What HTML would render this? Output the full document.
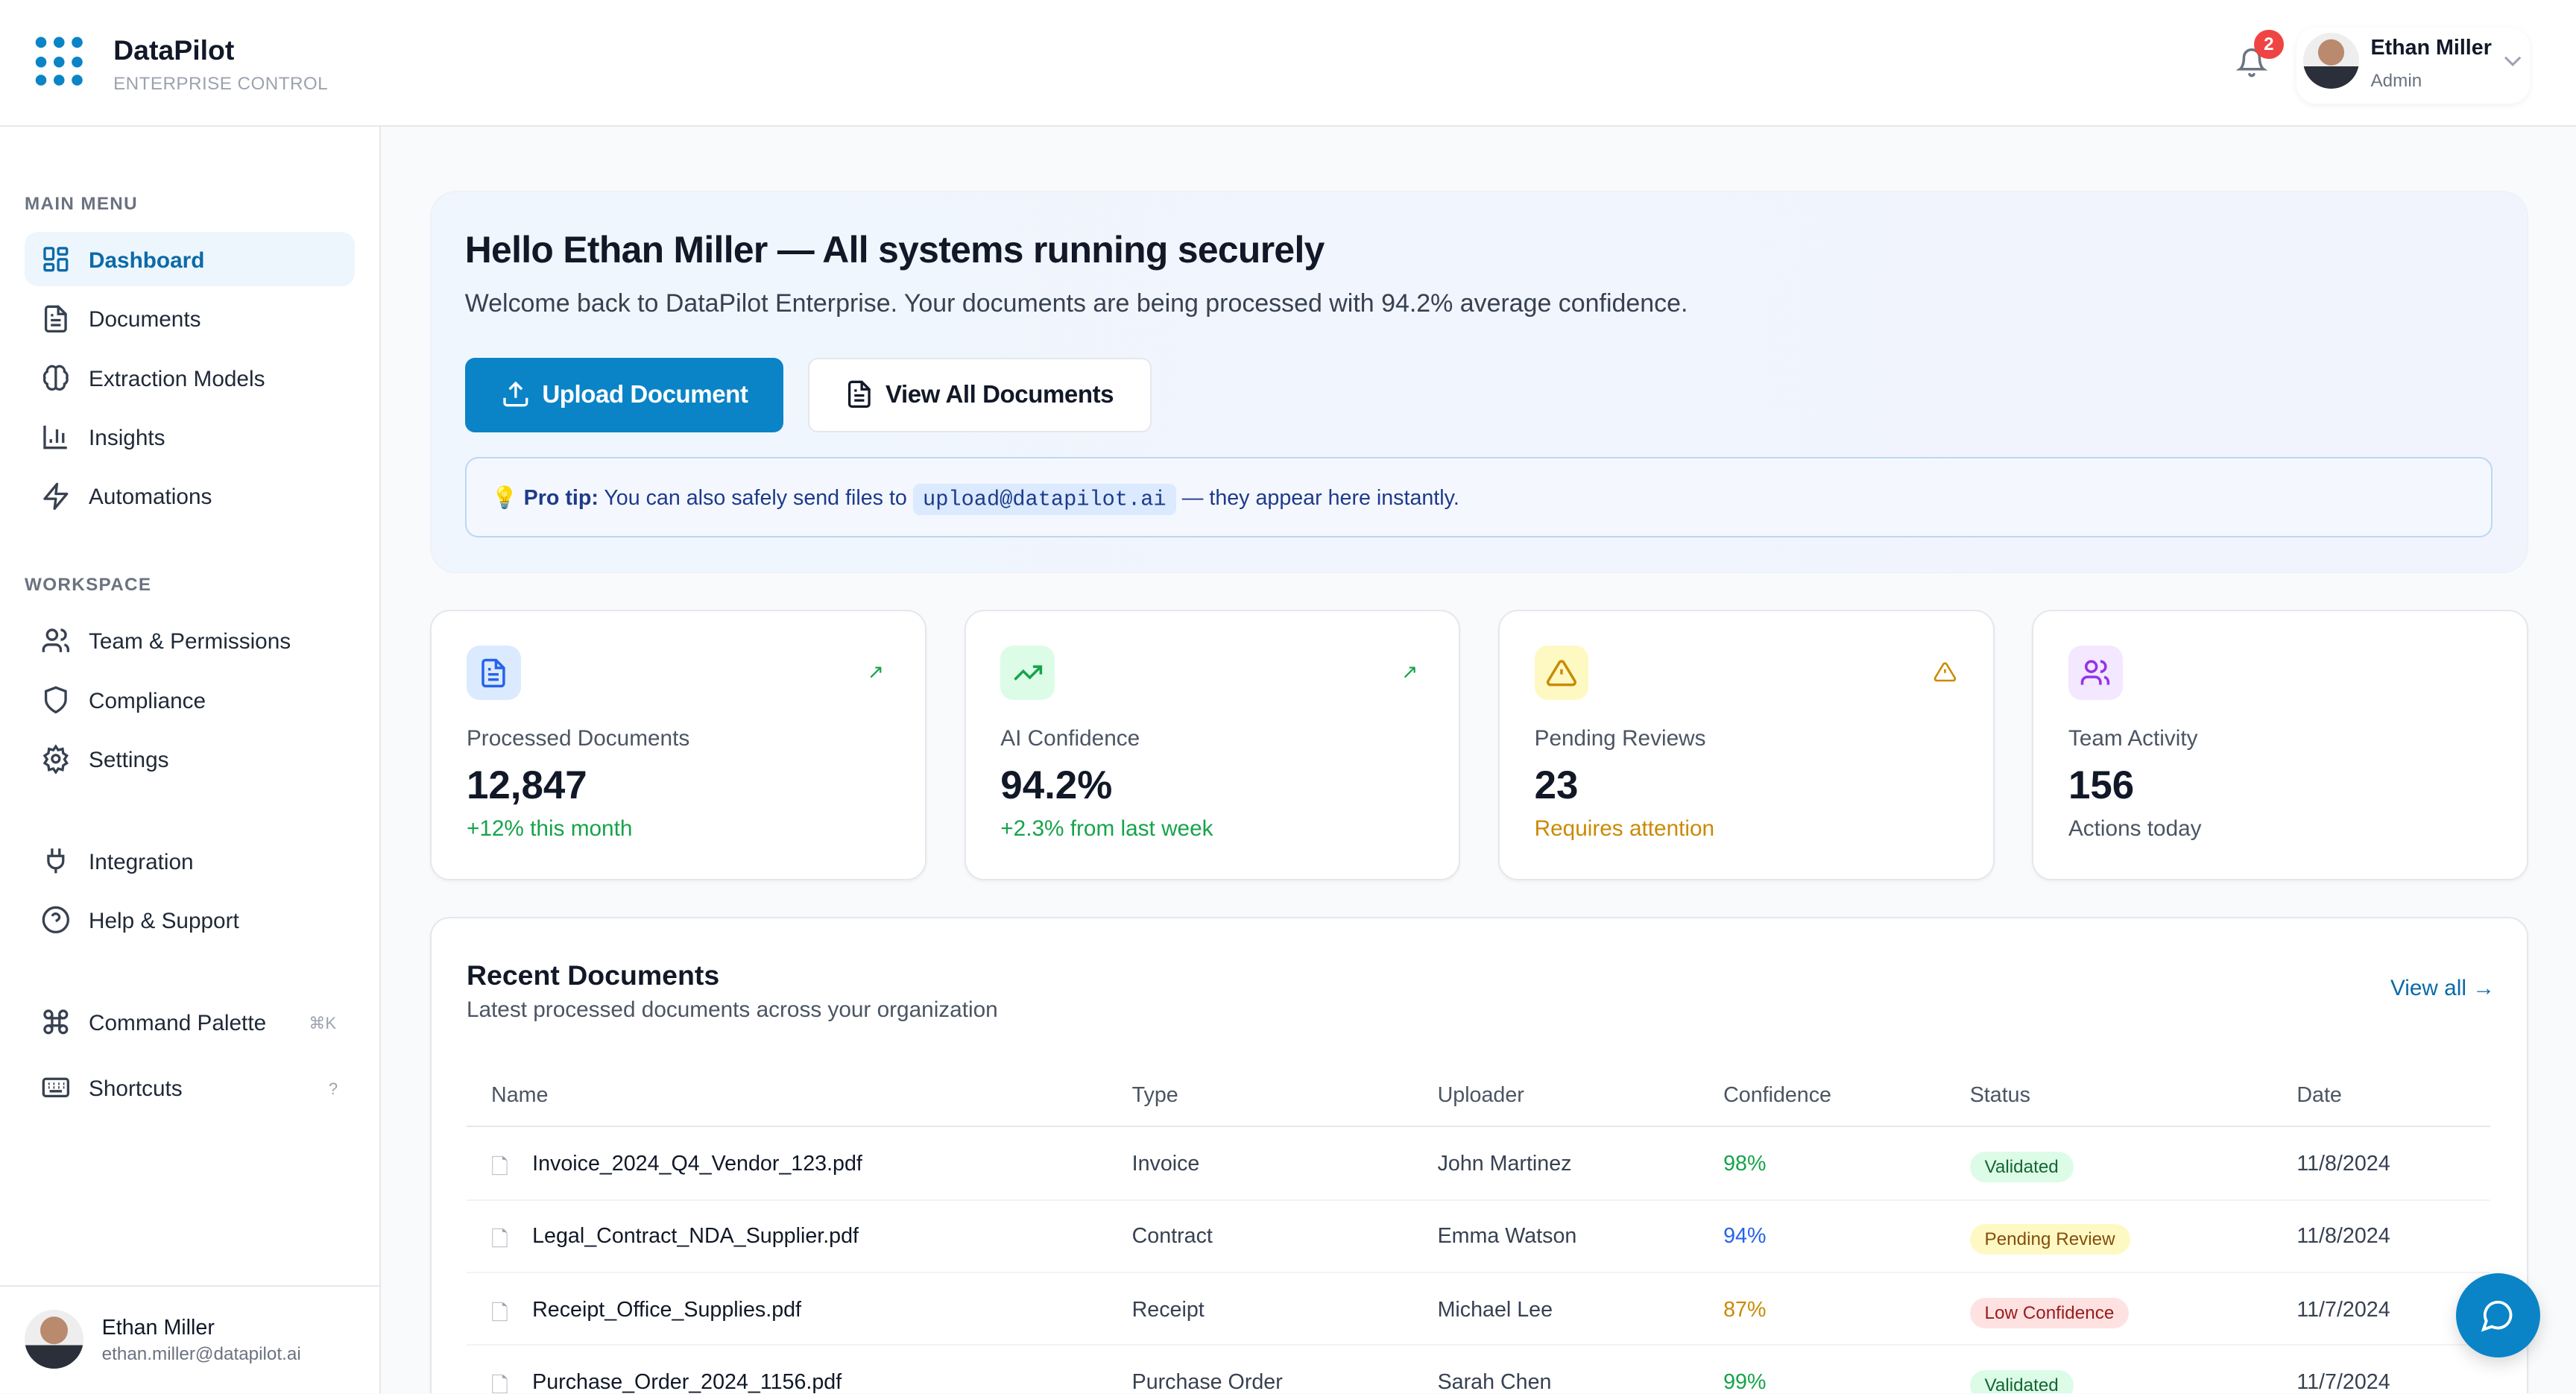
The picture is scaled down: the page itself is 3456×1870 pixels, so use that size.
<!DOCTYPE html>
<html><head><meta charset="utf-8"><style>
*{box-sizing:border-box;margin:0;padding:0}
html,body{width:3456px;height:1870px;overflow:hidden;background:#f8fafc}
#w{zoom:2.2041;width:1568px;height:848px;position:relative;font-family:"Liberation Sans",sans-serif;color:#111827;background:#f8fafc;overflow:hidden}
.a{position:absolute;white-space:nowrap}
.hdr{left:0;top:0;width:1568px;height:77px;background:#fff;border-bottom:1px solid #e5e7eb}
.side{left:0;top:77px;width:232px;height:771px;background:#fff;border-right:1px solid #e5e7eb}
.sec{font-size:11px;color:#6b7280;letter-spacing:.6px;font-weight:bold}
.item{font-size:13.5px;color:#1f2937}
.ico{position:absolute;width:18px;height:18px}
.card{background:#fff;border:1px solid #e5e7eb;border-radius:12px;box-shadow:0 1px 2px rgba(0,0,0,.04)}
.lbl{font-size:13.5px;color:#4b5563}
.val{font-size:24px;font-weight:bold;color:#111827}
.th{font-size:13px;color:#4b5563;top:659px}
.td{font-size:13px;color:#374151}
.badge{font-size:11px;padding:3px 9px;border-radius:10px}
</style></head><body><div id="w">
<div class="a hdr"></div>
<svg class="a" style="left:20px;top:22px" width="32" height="32" viewBox="0 0 32 32" fill="#0a84c6"><circle cx="5" cy="4" r="3.3"/><circle cx="16" cy="4" r="3.3"/><circle cx="27" cy="4" r="3.3"/><circle cx="5" cy="16" r="3.3"/><circle cx="16" cy="16" r="3.3"/><circle cx="27" cy="16" r="3.3"/><circle cx="5" cy="27" r="3.3"/><circle cx="16" cy="27" r="3.3"/><circle cx="27" cy="27" r="3.3"/></svg>
<div class="a" style="left:69px;top:21px;font-size:17px;font-weight:bold">DataPilot</div>
<div class="a" style="left:69px;top:45px;font-size:11px;color:#9ca3af;letter-spacing:.2px">ENTERPRISE CONTROL</div>
<svg class="a" style="left:1361px;top:28px" width="19" height="20" viewBox="0 0 24 24" fill="none" stroke="#6b7280" stroke-width="2" stroke-linecap="round"><path d="M6 8a6 6 0 0 1 12 0c0 7 3 9 3 9H3s3-2 3-9"/><path d="M10.3 21a1.9 1.9 0 0 0 3.4 0"/></svg>
<div class="a" style="left:1372px;top:18px;width:18px;height:18px;border-radius:9px;background:#ef4444;color:#fff;font-size:11px;text-align:center;line-height:18px;font-weight:bold">2</div>
<div class="a" style="left:1398px;top:17px;width:142px;height:46px;border-radius:12px;box-shadow:0 1px 4px rgba(0,0,0,.06)"></div>
<div class="a" style="left:1402px;top:20px;width:34px;height:34px;border-radius:17px;background:radial-gradient(circle at 50% 35%,#b98a6e 0 28%,transparent 29%),linear-gradient(180deg,#eee 0 60%,#2b2f3a 60%)"></div>
<div class="a" style="left:1443px;top:22px;font-size:13px;font-weight:bold">Ethan Miller</div>
<div class="a" style="left:1443px;top:43px;font-size:11px;color:#6b7280">Admin</div>
<svg class="a" style="left:1524px;top:33px" width="11" height="8" viewBox="0 0 12 8" fill="none" stroke="#9ca3af" stroke-width="1.5"><path d="M1 1.5l5 5 5-5"/></svg>

<div class="a side"></div>
<div class="a sec" style="left:15px;top:118px">MAIN MENU</div>
<div class="a" style="left:15px;top:141px;width:201px;height:33px;background:#eef6fd;border-radius:8px"></div>
<svg class="ico" style="left:25px;top:149px" viewBox="0 0 24 24" fill="none" stroke="#0b6aa8" stroke-width="2"><rect x="3" y="3" width="7" height="9" rx="1"/><rect x="14" y="3" width="7" height="5" rx="1"/><rect x="14" y="12" width="7" height="9" rx="1"/><rect x="3" y="16" width="7" height="5" rx="1"/></svg>
<div class="a item" style="left:54px;top:151px;color:#0b6aa8;font-weight:bold">Dashboard</div>
<svg class="ico" style="left:25px;top:185px" viewBox="0 0 24 24" fill="none" stroke="#374151" stroke-width="2"><path d="M14 2H6a2 2 0 0 0-2 2v16a2 2 0 0 0 2 2h12a2 2 0 0 0 2-2V8z"/><path d="M14 2v6h6M8 13h8M8 17h8M8 9h2"/></svg>
<div class="a item" style="left:54px;top:187px">Documents</div>
<svg class="ico" style="left:25px;top:221px" viewBox="0 0 24 24" fill="none" stroke="#374151" stroke-width="2"><path d="M12 4a4 4 0 0 0-7 3 4 4 0 0 0-2 5 4 4 0 0 0 2 5 4 4 0 0 0 7 3zM12 4a4 4 0 0 1 7 3 4 4 0 0 1 2 5 4 4 0 0 1-2 5 4 4 0 0 1-7 3z"/></svg>
<div class="a item" style="left:54px;top:223px">Extraction Models</div>
<svg class="ico" style="left:25px;top:257px" viewBox="0 0 24 24" fill="none" stroke="#374151" stroke-width="2"><path d="M3 3v18h18M8 17v-3M13 17V6M18 17v-8"/></svg>
<div class="a item" style="left:54px;top:259px">Insights</div>
<svg class="ico" style="left:25px;top:293px" viewBox="0 0 24 24" fill="none" stroke="#374151" stroke-width="2" stroke-linejoin="round"><path d="M13 2L3 14h9l-1 8 10-12h-9z"/></svg>
<div class="a item" style="left:54px;top:295px">Automations</div>
<div class="a sec" style="left:15px;top:350px">WORKSPACE</div>
<svg class="ico" style="left:25px;top:381px" viewBox="0 0 24 24" fill="none" stroke="#374151" stroke-width="2"><circle cx="9" cy="7" r="4"/><path d="M2 21v-2a4 4 0 0 1 4-4h6a4 4 0 0 1 4 4v2M16 3a4 4 0 0 1 0 8M22 21v-2a4 4 0 0 0-3-4"/></svg>
<div class="a item" style="left:54px;top:383px">Team &amp; Permissions</div>
<svg class="ico" style="left:25px;top:417px" viewBox="0 0 24 24" fill="none" stroke="#374151" stroke-width="2"><path d="M12 22s8-4 8-10V5l-8-3-8 3v7c0 6 8 10 8 10z"/></svg>
<div class="a item" style="left:54px;top:419px">Compliance</div>
<svg class="ico" style="left:25px;top:453px" viewBox="0 0 24 24" fill="none" stroke="#374151" stroke-width="2"><circle cx="12" cy="12" r="3"/><path d="M12 2l2 3 3.5-1 .5 3.5 3 2-2 3 2 3-3 2-.5 3.5-3.5-1-2 3-2-3-3.5 1L6 17.5l-3-2 2-3-2-3 3-2L6.5 4 10 5z"/></svg>
<div class="a item" style="left:54px;top:455px">Settings</div>
<svg class="ico" style="left:25px;top:515px" viewBox="0 0 24 24" fill="none" stroke="#374151" stroke-width="2"><path d="M9 2v6M15 2v6M6 8h12v4a6 6 0 0 1-12 0zM12 18v4"/></svg>
<div class="a item" style="left:54px;top:517px">Integration</div>
<svg class="ico" style="left:25px;top:551px" viewBox="0 0 24 24" fill="none" stroke="#374151" stroke-width="2"><circle cx="12" cy="12" r="10"/><path d="M9.1 9a3 3 0 0 1 5.8 1c0 2-3 3-3 3M12 17h.01"/></svg>
<div class="a item" style="left:54px;top:553px">Help &amp; Support</div>
<svg class="ico" style="left:25px;top:613px" viewBox="0 0 24 24" fill="none" stroke="#374151" stroke-width="2"><path d="M9 6v12M15 6v12M6 9h12M6 15h12"/><circle cx="6" cy="6" r="3"/><circle cx="18" cy="6" r="3"/><circle cx="6" cy="18" r="3"/><circle cx="18" cy="18" r="3"/></svg>
<div class="a item" style="left:54px;top:615px">Command Palette</div>
<div class="a" style="left:188px;top:617px;font-size:10px;color:#9ca3af">⌘K</div>
<svg class="ico" style="left:25px;top:653px" viewBox="0 0 24 24" fill="none" stroke="#374151" stroke-width="2"><rect x="2" y="5" width="20" height="14" rx="2"/><path d="M6 9h1M10 9h1M14 9h1M18 9h1M6 12h1M10 12h1M14 12h1M18 12h1M7 15h10"/></svg>
<div class="a item" style="left:54px;top:655px">Shortcuts</div>
<div class="a" style="left:200px;top:657px;font-size:10px;color:#9ca3af">?</div>
<div class="a" style="left:0;top:782px;width:231px;border-top:1px solid #e5e7eb"></div>
<div class="a" style="left:15px;top:797px;width:36px;height:36px;border-radius:18px;background:radial-gradient(circle at 50% 35%,#b98a6e 0 28%,transparent 29%),linear-gradient(180deg,#eee 0 60%,#2b2f3a 60%)"></div>
<div class="a" style="left:62px;top:801px;font-size:13px;color:#111827">Ethan Miller</div>
<div class="a" style="left:62px;top:818px;font-size:11px;color:#6b7280">ethan.miller@datapilot.ai</div>

<div class="a" style="left:262px;top:116px;width:1277px;height:233px;border-radius:16px;background:linear-gradient(90deg,#f0f6fd,#f2f4fd);border:1px solid #eef2f8"></div>
<div class="a" style="left:283px;top:139px;font-size:22.6px;font-weight:bold;letter-spacing:-.3px">Hello Ethan Miller — All systems running securely</div>
<div class="a" style="left:283px;top:176px;font-size:15.4px;color:#374151">Welcome back to DataPilot Enterprise. Your documents are being processed with 94.2% average confidence.</div>
<div class="a" style="left:283px;top:218px;width:194px;height:45px;background:#0a84c6;border-radius:6px"></div>
<svg class="a" style="left:305px;top:231px" width="18" height="18" viewBox="0 0 24 24" fill="none" stroke="#fff" stroke-width="2"><path d="M21 15v4a2 2 0 0 1-2 2H5a2 2 0 0 1-2-2v-4M17 8l-5-5-5 5M12 3v12"/></svg>
<div class="a" style="left:330px;top:232px;font-size:15px;color:#fff;font-weight:bold;letter-spacing:-.2px">Upload Document</div>
<div class="a" style="left:492px;top:218px;width:209px;height:45px;background:#fff;border:1px solid #e5e7eb;border-radius:6px"></div>
<svg class="a" style="left:514px;top:231px" width="18" height="18" viewBox="0 0 24 24" fill="none" stroke="#111827" stroke-width="2"><path d="M14 2H6a2 2 0 0 0-2 2v16a2 2 0 0 0 2 2h12a2 2 0 0 0 2-2V8z"/><path d="M14 2v6h6M8 13h8M8 17h8M8 9h2"/></svg>
<div class="a" style="left:539px;top:232px;font-size:15px;font-weight:bold;letter-spacing:-.2px">View All Documents</div>
<div class="a" style="left:283px;top:278px;width:1234px;height:49px;border:1px solid #bcd7f2;border-radius:8px;background:#f4f8fe"></div>
<div class="a" style="left:299px;top:295px;font-size:13px;color:#1e3a8a">💡 <b>Pro tip:</b> You can also safely send files to <span style="font-family:'Liberation Mono',monospace;background:#dbeafe;padding:2px 6px;border-radius:4px">upload@datapilot.ai</span> — they appear here instantly.</div>

<div class="a card" style="left:262px;top:371px;width:302px;height:165px"></div>
<div class="a" style="left:284px;top:393px;width:33px;height:33px;border-radius:8px;background:#dbeafe"></div>
<svg class="a" style="left:291px;top:400px" width="19" height="19" viewBox="0 0 24 24" fill="none" stroke="#2563eb" stroke-width="2"><path d="M14 2H6a2 2 0 0 0-2 2v16a2 2 0 0 0 2 2h12a2 2 0 0 0 2-2V8z"/><path d="M14 2v6h6M8 13h8M8 17h8M8 9h2"/></svg>
<div class="a" style="left:528px;top:402px;font-size:12px;color:#16a34a">↗</div>
<div class="a lbl" style="left:284px;top:442px">Processed Documents</div>
<div class="a val" style="left:284px;top:464px">12,847</div>
<div class="a" style="left:284px;top:497px;font-size:13.5px;color:#16a34a">+12% this month</div>

<div class="a card" style="left:587px;top:371px;width:302px;height:165px"></div>
<div class="a" style="left:609px;top:393px;width:33px;height:33px;border-radius:8px;background:#dcfce7"></div>
<svg class="a" style="left:616px;top:400px" width="19" height="19" viewBox="0 0 24 24" fill="none" stroke="#16a34a" stroke-width="2"><path d="M22 7l-8.5 8.5-5-5L2 17M16 7h6v6"/></svg>
<div class="a" style="left:853px;top:402px;font-size:12px;color:#16a34a">↗</div>
<div class="a lbl" style="left:609px;top:442px">AI Confidence</div>
<div class="a val" style="left:609px;top:464px">94.2%</div>
<div class="a" style="left:609px;top:497px;font-size:13.5px;color:#16a34a">+2.3% from last week</div>

<div class="a card" style="left:912px;top:371px;width:302px;height:165px"></div>
<div class="a" style="left:934px;top:393px;width:33px;height:33px;border-radius:8px;background:#fef9c3"></div>
<svg class="a" style="left:941px;top:400px" width="19" height="19" viewBox="0 0 24 24" fill="none" stroke="#ca8a04" stroke-width="2"><path d="M10.3 3.9L1.8 18a2 2 0 0 0 1.7 3h17a2 2 0 0 0 1.7-3L13.7 3.9a2 2 0 0 0-3.4 0zM12 9v4M12 17h.01"/></svg>
<svg class="a" style="left:1177px;top:402px" width="14" height="14" viewBox="0 0 24 24" fill="none" stroke="#ca8a04" stroke-width="2"><path d="M10.3 3.9L1.8 18a2 2 0 0 0 1.7 3h17a2 2 0 0 0 1.7-3L13.7 3.9a2 2 0 0 0-3.4 0zM12 9v4M12 17h.01"/></svg>
<div class="a lbl" style="left:934px;top:442px">Pending Reviews</div>
<div class="a val" style="left:934px;top:464px">23</div>
<div class="a" style="left:934px;top:497px;font-size:13.5px;color:#ca8a04">Requires attention</div>

<div class="a card" style="left:1237px;top:371px;width:302px;height:165px"></div>
<div class="a" style="left:1259px;top:393px;width:33px;height:33px;border-radius:8px;background:#f3e8ff"></div>
<svg class="a" style="left:1266px;top:400px" width="19" height="19" viewBox="0 0 24 24" fill="none" stroke="#9333ea" stroke-width="2"><circle cx="9" cy="7" r="4"/><path d="M2 21v-2a4 4 0 0 1 4-4h6a4 4 0 0 1 4 4v2M16 3a4 4 0 0 1 0 8M22 21v-2a4 4 0 0 0-3-4"/></svg>
<div class="a lbl" style="left:1259px;top:442px">Team Activity</div>
<div class="a val" style="left:1259px;top:464px">156</div>
<div class="a" style="left:1259px;top:497px;font-size:13.5px;color:#4b5563">Actions today</div>

<div class="a card" style="left:262px;top:558px;width:1277px;height:320px"></div>
<div class="a" style="left:284px;top:584px;font-size:17px;font-weight:bold">Recent Documents</div>
<div class="a" style="left:284px;top:607px;font-size:13.5px;color:#4b5563">Latest processed documents across your organization</div>
<div class="a" style="left:1455px;top:594px;font-size:13.5px;color:#0b6aa8">View all →</div>
<div class="a th" style="left:299px">Name</div><div class="a th" style="left:689px">Type</div><div class="a th" style="left:875px">Uploader</div><div class="a th" style="left:1049px">Confidence</div><div class="a th" style="left:1199px">Status</div><div class="a th" style="left:1398px">Date</div>
<div class="a" style="left:284px;top:685px;width:1232px;border-top:1px solid #e5e7eb"></div>
<div class="a" style="left:284px;top:730px;width:1232px;border-top:1px solid #f1f3f5"></div>
<div class="a" style="left:284px;top:774px;width:1232px;border-top:1px solid #f1f3f5"></div>
<div class="a" style="left:284px;top:818px;width:1232px;border-top:1px solid #f1f3f5"></div>

<div class="a td" style="left:299px;top:701px;color:#9ca3af">🗋</div>
<div class="a td" style="left:324px;top:701px;color:#111827">Invoice_2024_Q4_Vendor_123.pdf</div>
<div class="a td" style="left:689px;top:701px">Invoice</div><div class="a td" style="left:875px;top:701px">John Martinez</div>
<div class="a td" style="left:1049px;top:701px;color:#16a34a">98%</div>
<div class="a badge" style="left:1199px;top:701px;background:#dcfce7;color:#166534">Validated</div>
<div class="a td" style="left:1398px;top:701px">11/8/2024</div>

<div class="a td" style="left:299px;top:745px;color:#9ca3af">🗋</div>
<div class="a td" style="left:324px;top:745px;color:#111827">Legal_Contract_NDA_Supplier.pdf</div>
<div class="a td" style="left:689px;top:745px">Contract</div><div class="a td" style="left:875px;top:745px">Emma Watson</div>
<div class="a td" style="left:1049px;top:745px;color:#2563eb">94%</div>
<div class="a badge" style="left:1199px;top:745px;background:#fef9c3;color:#854d0e">Pending Review</div>
<div class="a td" style="left:1398px;top:745px">11/8/2024</div>

<div class="a td" style="left:299px;top:790px;color:#9ca3af">🗋</div>
<div class="a td" style="left:324px;top:790px;color:#111827">Receipt_Office_Supplies.pdf</div>
<div class="a td" style="left:689px;top:790px">Receipt</div><div class="a td" style="left:875px;top:790px">Michael Lee</div>
<div class="a td" style="left:1049px;top:790px;color:#ca8a04">87%</div>
<div class="a badge" style="left:1199px;top:790px;background:#fee2e2;color:#991b1b">Low Confidence</div>
<div class="a td" style="left:1398px;top:790px">11/7/2024</div>

<div class="a td" style="left:299px;top:834px;color:#9ca3af">🗋</div>
<div class="a td" style="left:324px;top:834px;color:#111827">Purchase_Order_2024_1156.pdf</div>
<div class="a td" style="left:689px;top:834px">Purchase Order</div><div class="a td" style="left:875px;top:834px">Sarah Chen</div>
<div class="a td" style="left:1049px;top:834px;color:#16a34a">99%</div>
<div class="a badge" style="left:1199px;top:834px;background:#dcfce7;color:#166534">Validated</div>
<div class="a td" style="left:1398px;top:834px">11/7/2024</div>

<div class="a" style="left:1495px;top:775px;width:51px;height:51px;border-radius:26px;background:#0a84c6;box-shadow:0 4px 10px rgba(0,0,0,.15)"></div>
<svg class="a" style="left:1510px;top:790px" width="21" height="21" viewBox="0 0 24 24" fill="none" stroke="#fff" stroke-width="2"><path d="M7.9 20A9 9 0 1 0 4 16.1L2 22z"/></svg>
</div></body></html>
